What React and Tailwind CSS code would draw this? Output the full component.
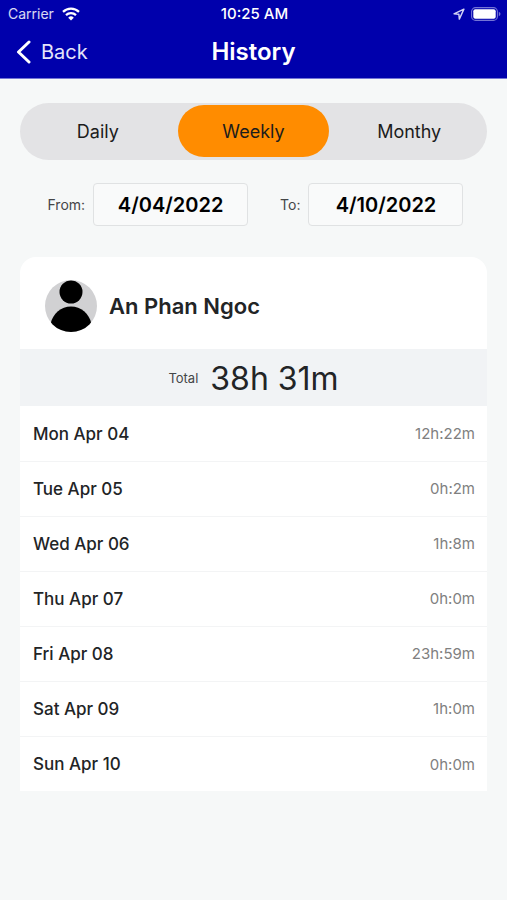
import { useState } from 'react';

const TABS = ['Daily', 'Weekly', 'Monthy'];

const DAYS = [
  { day: 'Mon Apr 04', time: '12h:22m' },
  { day: 'Tue Apr 05', time: '0h:2m' },
  { day: 'Wed Apr 06', time: '1h:8m' },
  { day: 'Thu Apr 07', time: '0h:0m' },
  { day: 'Fri Apr 08', time: '23h:59m' },
  { day: 'Sat Apr 09', time: '1h:0m' },
  { day: 'Sun Apr 10', time: '0h:0m' },
];

function StatusBar() {
  return (
    <div className="grid grid-cols-3 items-center h-7 pl-2 pr-1.5 text-sm">
      <div className="flex items-center gap-2 text-white/85">
        <span>Carrier</span>
        <svg width="18" height="14" viewBox="0 0 18 14" fill="none" stroke="white" strokeWidth="2.2">
          <path d="M1 4.9a11.4 11.4 0 0 1 16 0" />
          <path d="M4 8.1a7.1 7.1 0 0 1 10 0" />
          <path d="M9 13.6 6.2 10.7a4 4 0 0 1 5.6 0Z" fill="white" stroke="none" />
        </svg>
      </div>
      <span className="text-center text-[15px] font-medium">10:25 AM</span>
      <div className="flex items-center justify-end gap-1.5">
        <svg width="12" height="12" viewBox="0 0 11 11" fill="none" stroke="#d3d3f5" strokeWidth="1.3" strokeLinejoin="round">
          <path d="M10 1 .9 5.3l4.5.4.4 4.5Z" />
        </svg>
        <svg width="30" height="14" viewBox="0 0 30 14">
          <rect x=".6" y=".6" width="25.8" height="12.8" rx="4" fill="none" stroke="#7474d6" strokeWidth="1.1" />
          <rect x="2.3" y="2.3" width="22.4" height="9.4" rx="2" fill="white" />
          <path d="M27.8 4.8c2.2.8 2.2 3.6 0 4.4Z" fill="#7474d6" />
        </svg>
      </div>
    </div>
  );
}

function DateField({ id, label, value, onChange }) {
  return (
    <div className="flex items-center gap-2">
      <label htmlFor={id} className="text-sm text-[#444648]">{label}</label>
      <input
        id={id}
        type="text"
        value={value}
        onChange={e => onChange(e.target.value)}
        className="w-[155px] h-[43px] rounded border border-[#e0e2e3] bg-[#f9fafa] text-center text-xl font-semibold text-black"
      />
    </div>
  );
}

export default function App() {
  const [tab, setTab] = useState('Weekly');
  const [from, setFrom] = useState('4/04/2022');
  const [to, setTo] = useState('4/10/2022');

  return (
    <div className="min-h-screen bg-[#f6f8f8] font-['Inter',sans-serif] text-[#222426]">
      {/* Header */}
      <header className="bg-[#0000ac] border-b border-[#7474d6] text-white">
        <StatusBar />
        <div className="grid grid-cols-3 items-center h-[50px] px-4 pb-0.5">
          <button className="flex items-center gap-2.5 text-xl text-[#e4e4fa]">
            <svg width="15" height="24" viewBox="0 0 15 24" fill="none" stroke="white" strokeWidth="3" strokeLinecap="round" strokeLinejoin="round">
              <path d="M13 2 2.5 12 13 22" />
            </svg>
            Back
          </button>
          <h1 className="text-center text-2xl font-semibold">History</h1>
        </div>
      </header>

      <main className="px-5 pt-6 pb-10">
        {/* Period tabs */}
        <div className="grid grid-cols-3 h-[57px] rounded-full bg-[#e3e3e5]">
          {TABS.map(t => (
            <button
              key={t}
              onClick={() => setTab(t)}
              className={`mx-0.5 mt-0.5 mb-[3px] pt-0.5 rounded-full text-lg text-[#1c1c1c] ${t === tab ? 'bg-[#ff8c00]' : ''}`}
            >
              {t}
            </button>
          ))}
        </div>

        {/* Date range */}
        <div className="flex flex-wrap justify-center gap-x-8 gap-y-3 mt-[23px] pl-1">
          <DateField id="from" label="From:" value={from} onChange={setFrom} />
          <DateField id="to" label="To:" value={to} onChange={setTo} />
        </div>

        {/* Summary card */}
        <section className="mt-[31px] overflow-hidden rounded-t-2xl bg-white">
          <div className="flex items-center gap-3 h-[92px] px-[25px] pt-1.5">
            <svg width="52" height="52" viewBox="0 0 52 52">
              <clipPath id="avatar"><circle cx="26" cy="26" r="26" /></clipPath>
              <g clipPath="url(#avatar)">
                <rect width="52" height="52" fill="#d1d1d3" />
                <circle cx="26" cy="12" r="11.5" />
                <path d="M5.5 44C8 33 16 26.5 26 26.5S44 33 46.5 44V52H5.5Z" />
              </g>
            </svg>
            <h2 className="text-[22px] font-semibold">An Phan Ngoc</h2>
          </div>
          <div className="flex items-center justify-center gap-3 h-[57px] pt-0.5 bg-[#f1f3f5]">
            <span className="text-[13px] text-[#444648]">Total</span>
            <span className="text-[32px]">38h 31m</span>
          </div>
          <table className="w-full">
            <tbody>
              {DAYS.map(({ day, time }) => (
                <tr key={day} className="h-[55px] border-b border-[#f3f4f5] last:border-b-0">
                  <th scope="row" className="pt-0.5 pl-[13px] text-left text-[17px] font-medium">{day}</th>
                  <td className="pt-0.5 pr-3 text-right text-[15px] text-[#808080]">{time}</td>
                </tr>
              ))}
            </tbody>
          </table>
        </section>
      </main>
    </div>
  );
}
